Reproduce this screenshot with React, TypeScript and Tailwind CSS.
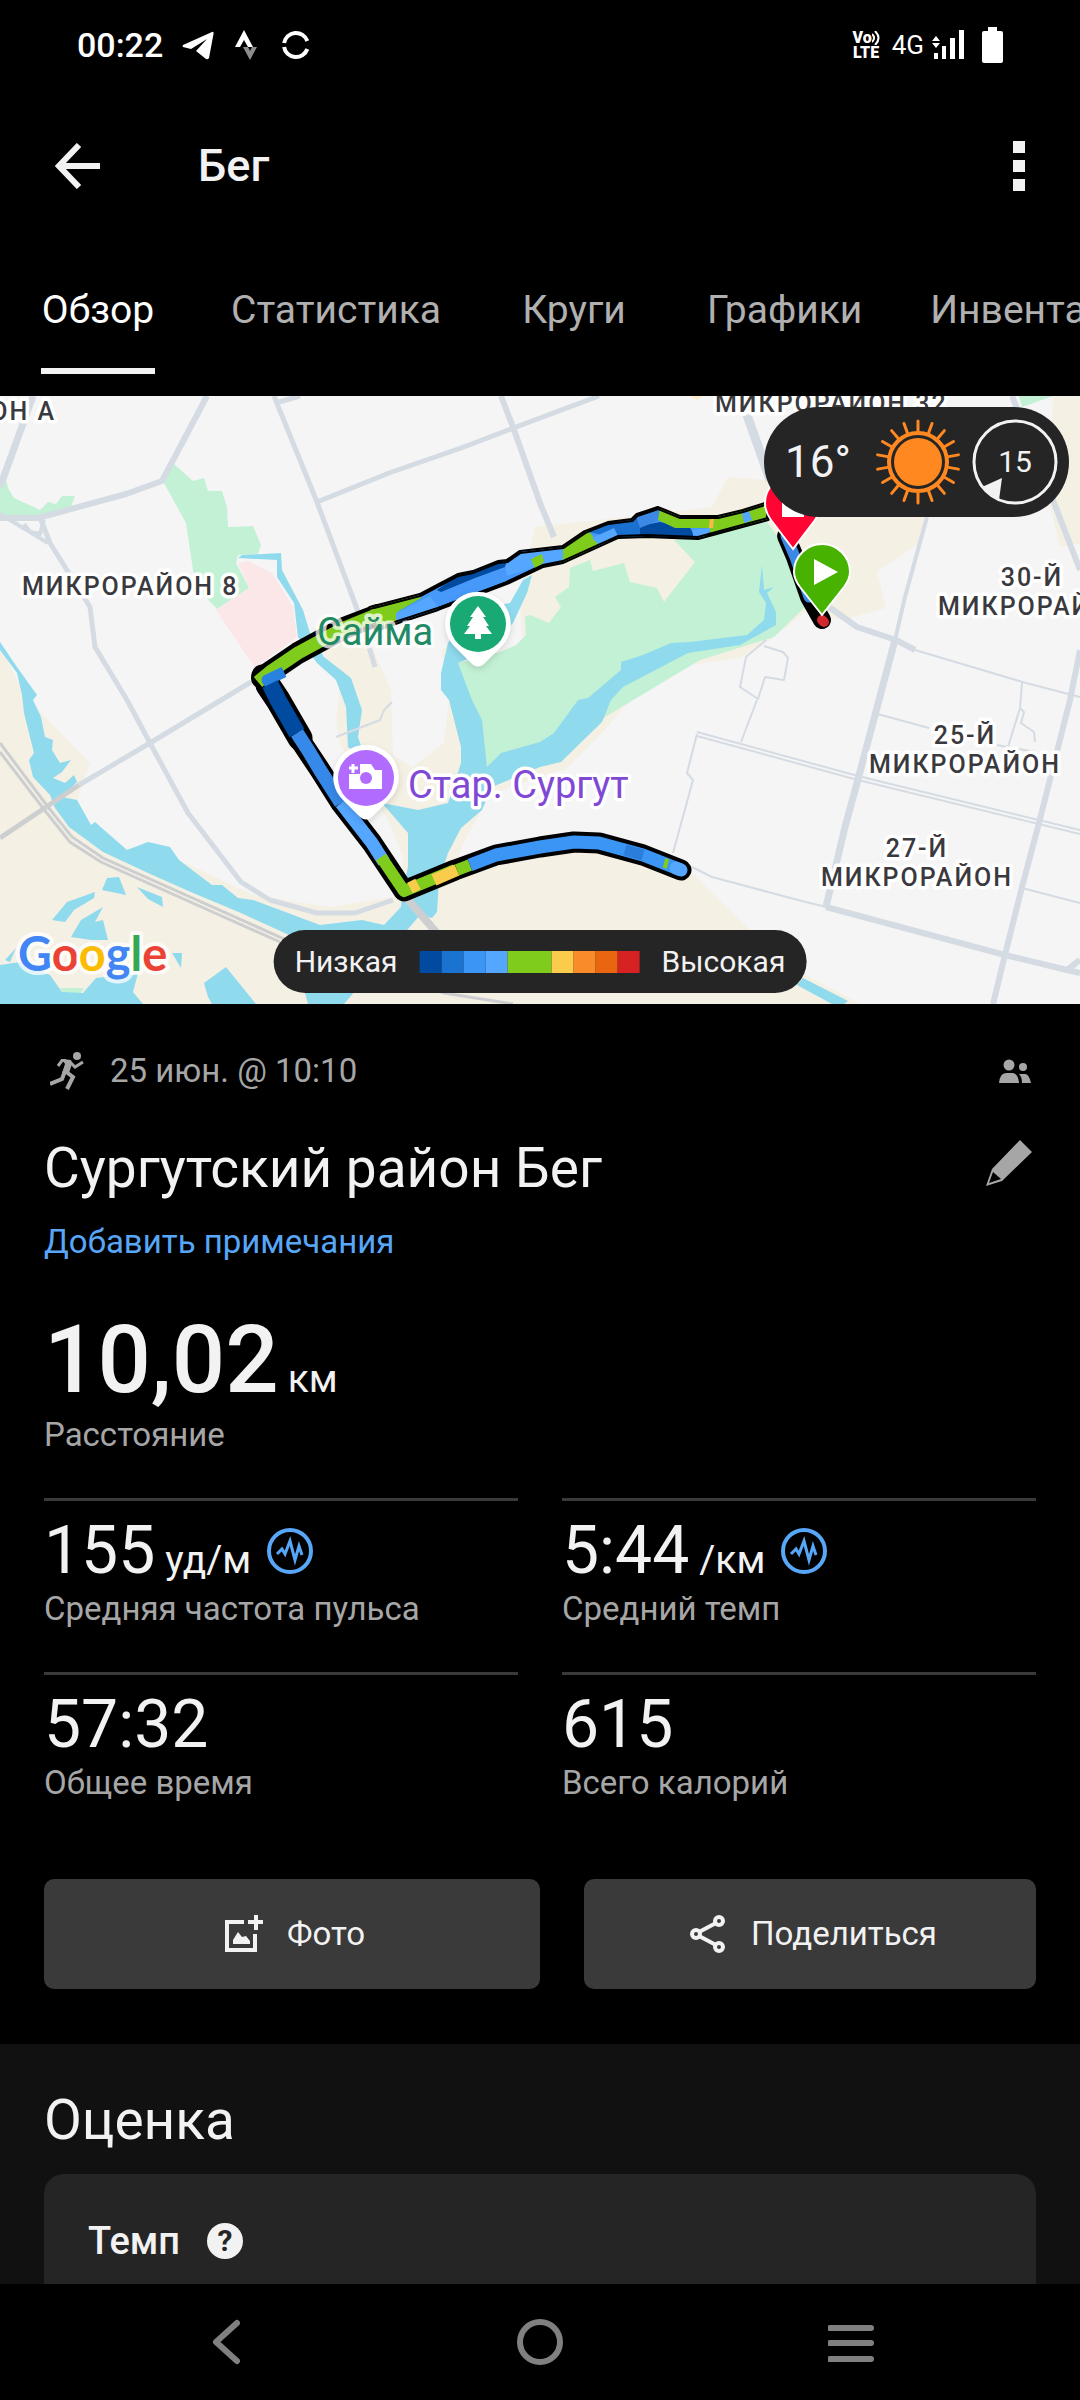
import React, { useState } from 'react';

const TABS = ['Обзор', 'Статистика', 'Круги', 'Графики', 'Инвентарь'];

const LEGEND_STEPS = [
  'w-[22px] bg-[#004a9f]',
  'w-[22px] bg-[#1a73d1]',
  'w-[22px] bg-[#3b95f5]',
  'w-[22px] bg-[#54a6ff]',
  'w-[44px] bg-[#80cc1c]',
  'w-[22px] bg-[#fbcb4c]',
  'w-[22px] bg-[#f98c28]',
  'w-[22px] bg-[#e9650f]',
  'w-[22px] bg-[#d62222]',
];

const SUN_RAYS = Array.from({ length: 18 }, (_, i) => i * 20);

const WATER = [
  'M0 642 17 667 37 695 33 700 41 717 45 737 53 740 52 750 60 763 71 760 62 772 53 778 65 783 74 775 77 782 62 797 77 800 91 825 95 822 127 850 148 842 170 847 179 860 212 885 222 885 238 898 253 900 320 925 362 920 384 925 401 907 402 893 408 867 408 833 382 803 418 810 448 803 461 763 461 747 449 700 441 690 441 673 448 643 470 610 510 603 523 580 532 575 527 593 513 623 490 650 458 663 472 700 482 720 487 767 501 753 540 742 554 733 578 700 588 698 621 670 621 662 643 655 671 643 690 642 747 635 764 620 766 603 759 592 762 565 764 590 774 587 767 593 776 612 776 625 740 645 688 653 623 687 611 700 602 722 561 762 540 767 492 787 482 810 461 828 448 853 439 880 437 912 432 918 420 915 344 1004 308 1004 289 935 241 913 193 893 148 873 103 852 69 827 55 808 50 795 33 777 29 760 34 753 24 713 22 695 17 673 0 650Z',
  'M238 558 242 555 281 553 282 570 303 610 310 633 324 657 351 678 362 710 358 737 366 760 348 747 346 707 336 680 317 663 298 637 294 603 277 577 277 560Z',
  'M0 965 20 962 50 975 62 992 83 993 96 978 138 973 133 992 143 1004 0 1004Z',
  'M107 878 119 877 126 895 102 890Z',
  'M52 920 67 902 95 892 94 898 74 910 65 922Z',
  'M71 937 81 920 103 907 95 922 103 920 108 940 91 940Z',
  'M137 887 162 897 163 907 148 899Z',
  'M172 953 182 953 181 968Z',
  'M5 960 16 948 10 962Z',
  'M204 983 226 967 256 1004 212 1004 208 997Z',
  'M797 985 803 978 848 1001 844 1004 832 1004Z',
];

const ROADS = [
  { d: 'M33 396 0 487', w: 7 },
  { d: 'M207 396 162 481 126 494 38 518 0 518', w: 6 },
  { d: 'M0 514 48 543 M24 524 30 532 40 534 44 520', w: 4 },
  { d: 'M41 520 50 543 90 607 95 647 127 700 150 743 188 813 241 882 270 900 317 913 355 913 393 900', w: 5 },
  { d: 'M251 682 150 743 79 785', w: 5 },
  { d: 'M274 396 317 502 360 617 375 667', w: 5 },
  { d: 'M317 502 389 473 461 448 540 418 599 396 M279 402 300 396', w: 5 },
  { d: 'M501 396 513 427 540 503 554 537', w: 6 },
  { d: 'M747 415 770 480', w: 9 },
  { d: 'M1012 396 1053 500 1080 570', w: 6 },
  { d: 'M927 517 905 597 895 640', w: 4 },
  { d: 'M895 640 879 700 857 783 845 827 826 907', w: 7 },
  { d: 'M826 907 1005 955 1067 970 1080 973 M1067 970 1080 960', w: 6 },
  { d: 'M1080 650 1070 700 1039 823 1022 887 1005 955 993 1004', w: 6 },
  { d: 'M829 607 857 627 896 640 915 650', w: 6 },
  { d: 'M915 650 1026 683 1080 697', w: 2 },
  { d: 'M697 732 858 776 1080 830 M697 736 858 780 1080 834', w: 2 },
  { d: 'M697 734 687 773 693 780 673 853', w: 2 },
  { d: 'M757 700 741 742 M874 713 929 728 M997 745 1035 752', w: 2 },
  { d: 'M764 646 783 652 788 658 784 680 765 677 758 699 740 687 746 657 766 640', w: 2 },
  { d: 'M692 867 712 877 798 900 826 907 M1022 888 1080 903', w: 2 },
  { d: 'M1022 683 1020 708 1008 747 M1020 708 1024 712 1021 723 1034 732 1035 742', w: 2 },
  { d: 'M336 737 380 720 384 710 392 702', w: 2 },
];

const LOWER_ROUTE =
  'M262 675 278 700 300 740 320 770 341 803 372 843 404 891 455 870 496 855 540 847 574 842 599 843 643 855 681 870';

// out and back laps overlap here, so the band is drawn as an area
const UPPER_BAND =
  'M370 608 420 595 437 586 458 575 473 572 498 562 507 561 520 552 563 547 585 532 608 523 632 520 637 515 658 508 680 517 718 517 743 511 768 503 768 519 698 538 647 536 618 537 563 562 543 566 507 583 438 609 398 622 376 630Z';

const UPPER_PATCHES = [
  { d: 'M366 608 420 594 421 598 397 612 400 626 366 636Z', c: '#80cc1c' },
  { d: 'M396 613 430 596 440 610 396 624Z', c: '#54a6ff' },
  { d: 'M437 590 458 575 507 560 505 567 475 578 441 592Z', c: '#004a9f' },
  { d: 'M505 566 522 551 563 547 563 562 535 567 507 576Z', c: '#54a6ff' },
  { d: 'M531 559 542 554 544 562 535 569Z', c: '#80cc1c' },
  { d: 'M563 547 588 530 601 547 563 564Z', c: '#80cc1c' },
  { d: 'M588 532 618 521 645 514 645 538 618 538Z', c: '#1a70ce' },
  { d: 'M592 538 614 528 618 536 600 546Z', c: '#54a6ff' },
  { d: 'M640 526 660 522 690 528 697 539 640 537Z', c: '#004a9f' },
  { d: 'M636 516 659 508 662 519 640 528Z', c: '#3b88e5' },
  { d: 'M692 530 711 528 706 537 694 540Z', c: '#54a6ff' },
  { d: 'M660 507 680 516 718 516 768 502 768 520 710 534 710 528 675 528 658 520Z', c: '#80cc1c' },
  { d: 'M710 518H714L713 528H709Z', c: '#fbb94c' },
  { d: 'M742 512 749 511 752 520 744 523Z', c: '#54a6ff' },
];

const ROUTE_SEGMENTS = [
  { d: 'M258 682 270 672 298 653 344 628 376 615', c: '#80cc1c', w: 13 },
  { d: 'M284 672 267 680 275 692', c: '#2a82e0', w: 11 },
  { d: 'M270 684 278 700 297 733', c: '#004a9f', w: 17 },
  { d: 'M297 733 308 750 320 770 341 803', c: '#3689e8', w: 14 },
  { d: 'M341 803 372 843 384 862', c: '#54a6ff', w: 13 },
  { d: 'M381 857 404 891 455 870', c: '#80cc1c', w: 12 },
  { d: 'M410 888 418 884 M434 880 457 870', c: '#fbcb4c', w: 12 },
  { d: 'M457 870 470 865', c: '#80cc1c', w: 12 },
  { d: 'M470 865 496 855 540 847 574 842 599 843 643 855 681 870', c: '#3b95f5', w: 13 },
  { d: 'M625 850 643 855', c: '#2a7ddb', w: 11 },
  { d: 'M664 863 668 864', c: '#80cc1c', w: 10 },
];

const DISTRICTS = [
  { x: 56, y: 420, text: 'ОН А', anchor: 'end' as const },
  { x: 22, y: 595, text: 'МИКРОРАЙОН 8', anchor: 'start' as const },
  { x: 715, y: 412, text: 'МИКРОРАЙОН 32', anchor: 'start' as const },
  { x: 1032, y: 586, text: '30-Й', anchor: 'middle' as const },
  { x: 938, y: 615, text: 'МИКРОРАЙОН', anchor: 'start' as const },
  { x: 965, y: 744, text: '25-Й', anchor: 'middle' as const },
  { x: 965, y: 773, text: 'МИКРОРАЙОН', anchor: 'middle' as const },
  { x: 917, y: 857, text: '27-Й', anchor: 'middle' as const },
  { x: 917, y: 886, text: 'МИКРОРАЙОН', anchor: 'middle' as const },
];

const StatusBar: React.FC = () => (
  <div className="flex h-[90px] items-center justify-between px-[77px] text-white">
    <div className="flex items-center">
      <span className="text-[34px] leading-10 font-medium">00:22</span>
      <svg className="ml-[19px] h-8 w-8" viewBox="0 0 32 32" fill="currentColor">
        <path d="M1 16 30 3Q32 2 31.500 5L27 29Q26 31 24 30L14 22 25 10 9 20 1 18Q0 17 1 16Z" />
      </svg>
      <svg className="ml-5 h-8 w-6" viewBox="0 0 24 32">
        <path d="M1 18 10 1 19 18H14L10 11 6 18Z" fill="#fff" />
        <path d="M9 18H14L16 22 18 18H23L16 31Z" fill="#8c8c8c" />
      </svg>
      <svg className="ml-[22px] h-8 w-8" viewBox="0 0 32 32" fill="none" stroke="currentColor" strokeWidth="4">
        <path d="M4.100 14A12 12 0 0 1 27.300 12M4.100 18A12 12 0 0 0 27.300 20" />
      </svg>
    </div>
    <div className="flex items-center">
      <div className="flex flex-col items-center text-[16px] leading-[15px] font-black">
        <span className="flex items-center">
          Vo
          <svg className="h-[14px] w-2" viewBox="0 0 8 14" fill="none" stroke="currentColor" strokeWidth="2">
            <path d="M0 3Q4 7 0 11M3 0Q10 7 3 14" />
          </svg>
        </span>
        <span>LTE</span>
      </div>
      <span className="ml-3 text-[26px] leading-8">4G</span>
      <svg className="ml-2 h-8 w-8" viewBox="0 0 32 32" fill="currentColor">
        <path d="M0 12 4 7 8 12ZM0 14 4 19 8 14ZM2 24H6V30H2ZM10 17H14V30H10ZM18 9H23V30H18ZM27 1H32V30H27Z" />
      </svg>
      <svg className="ml-[18px] h-9 w-[21px]" viewBox="0 0 21 36" fill="currentColor">
        <path d="M6 0H15V4H19Q21 4 21 6V34Q21 36 19 36H2Q0 36 0 34V6Q0 4 2 4H6Z" />
      </svg>
    </div>
  </div>
);

const PulseIcon: React.FC = () => (
  <svg className="ml-4 h-[46px] w-[46px] self-center" viewBox="-23 -23 46 46" fill="none" stroke="#58a6f7">
    <circle r="21" strokeWidth="4" />
    <path d="M-13 3-8-2-5 3 0-10 5 9 9-5 12 4" strokeWidth="3" />
  </svg>
);

const RouteMap: React.FC = () => (
  <svg className="block w-full font-['Roboto',sans-serif]" viewBox="0 396 1080 608" role="img" aria-label="Карта">
    <rect y="396" width="1080" height="608" fill="#f5f5f5" />

    {/* sandy ground */}
    <g fill="#f4f0e4">
      <path d="M0 645 22 690 45 717 90 763 77 800 91 825 127 850 148 842 179 860 253 895 330 907 393 897 403 867 403 843 375 800 440 830 439 880 500 850 560 838 643 842 692 873 750 930 802 973 860 1004 0 1004Z" />
      <path d="M312 627 372 647 391 690 393 755 413 767 444 743 450 690 441 650 460 640 480 790 448 820 418 820 382 803 340 745 336 720 340 690Z" />
      <path d="M382 803 420 800 500 750 560 770 490 795 465 840 440 900 400 910 404 860Z" />
      <path d="M535 527 643 515 712 507 728 477 764 480 927 517 919 543 877 572 886 608 843 620 805 612 770 640 740 658 688 665 640 690 600 735 565 770 530 770 520 600Z" />
      <path d="M1053 396H1080V544L1060 547 1050 505Z" />
      <path d="M690 396H703L697 400Z" fill="#fbecc9" />
    </g>

    {/* parks */}
    <g fill="#c3f1d5">
      <path d="M174 464 193 481 204 478 208 491 222 491 227 507 228 527 253 526 261 545 258 554 238 555 236 563 249 588 217 609 196 587 191 557 186 523 164 483Z" />
      <path d="M0 480 5 477 9 490 14 498 40 510 48 502 56 504 62 496H75L71 507 34 518 0 517Z" />
      <path d="M458 663 500 652 516 645 526 635 525 617 530 615 549 623 561 607 555 597 569 587 570 568 590 560 593 571 624 563 630 582 657 588 664 602 695 562 674 540 712 533 764 518 778 537 805 607 774 637 700 660 600 720 487 767 470 720Z" />
      <path d="M1019 396H1053L1022 407Z" />
      <path d="M60 988H84L80 994H64Z" />
    </g>
    <path d="M238 563 248 561 272 573 293 607 297 637 255 668 216 610 249 588Z" fill="#fbe7e7" />

    <g fill="#90daee">
      {WATER.map((d) => (
        <path key={d} d={d} />
      ))}
    </g>

    {/* railway */}
    <g fill="none" stroke="#cdced0" strokeWidth="3">
      <path d="M0 743 48 807 72 837 103 858 282 938 444 993 513 1004M0 752 46 812 70 842 101 862 280 942" />
      <path d="M79 785 0 838" strokeWidth="5" />
      <path d="M404 895 436 932" strokeWidth="8" />
    </g>
    <g fill="none" stroke="#d5dbe3" strokeLinejoin="round">
      {ROADS.map((road) => (
        <path key={road.d} d={road.d} strokeWidth={road.w} />
      ))}
    </g>

    {/* recorded track */}
    <g fill="none" strokeLinejoin="round" strokeLinecap="round">
      <g stroke="#000">
        <path d="M262 678 270 672 298 653 344 628 378 615" strokeWidth="22" />
        <path d={UPPER_BAND} strokeWidth="4" fill="#4699f8" />
        <path d={LOWER_ROUTE} strokeWidth="21" />
        <path d="M268 685 278 700 300 738" strokeWidth="25" />
        <path d="M786 536 795 557 809 597 822 620" strokeWidth="18" />
      </g>
      <path d="M786 536 795 557 809 597" stroke="#3b88e5" strokeWidth="11" />
      <path d="M822 620 824 622" stroke="#d0282c" strokeWidth="10" />
      <clipPath id="band">
        <path d={UPPER_BAND} />
      </clipPath>
      <g clipPath="url(#band)">
        {UPPER_PATCHES.map((p) => (
          <path key={p.d} d={p.d} fill={p.c} />
        ))}
        <path d={UPPER_BAND} stroke="#000" strokeWidth="4" />
      </g>
      <g strokeLinecap="butt">
        {ROUTE_SEGMENTS.map((s) => (
          <path key={s.d} d={s.d} stroke={s.c} strokeWidth={s.w} />
        ))}
      </g>
      <path d="M676 868 681 870" stroke="#54a6ff" strokeWidth="13" />
    </g>

    <g
      className="text-[25px] font-medium tracking-[2px]"
      fill="#3a3a3e"
      stroke="#fff"
      strokeWidth="7"
      strokeLinejoin="round"
      paintOrder="stroke"
    >
      {DISTRICTS.map((d) => (
        <text key={`${d.text}${d.y}`} x={d.x} y={d.y} textAnchor={d.anchor}>
          {d.text}
        </text>
      ))}
    </g>
    <g className="text-[38px]" stroke="#fff" strokeWidth="7" strokeLinejoin="round" paintOrder="stroke">
      <text x="317" y="645" fill="#1f8a63" strokeOpacity="0.75">
        Сайма
      </text>
      <text x="408" y="798" fill="#8148d6">
        Стар. Сургут
      </text>
    </g>

    {/* park pin */}
    <path d="M478 592A32 32 0 0 1 501 647L484 664Q478 669 472 664L455 647A32 32 0 0 1 478 592Z" fill="#fff" className="drop-shadow-md" />
    <circle cx="478" cy="624" r="28" fill="#19a974" />
    <path d="M478 606 486 617H483L489 626H486L492 634H481V639H475V634H464L470 626H467L473 617H470Z" fill="#fff" />

    {/* sightseeing pin */}
    <path d="M366 745A32 32 0 0 1 389 800L372 817Q366 822 360 817L343 800A32 32 0 0 1 366 745Z" fill="#fff" className="drop-shadow-md" />
    <circle cx="366" cy="778" r="28" fill="#b16bff" />
    <path d="M349 774H360V764H371L375 770H382V789H349Z" fill="#fff" />
    <path d="M353 764V773M349 768H358" stroke="#fff" strokeWidth="3" />
    <circle cx="366" cy="778" r="6" fill="#b16bff" />

    {/* finish and start */}
    <path d="M793 549 771 520Q765 512 765 503A28 28 0 0 1 821 503Q821 512 815 520Z" fill="#ff0533" stroke="#fff" strokeWidth="2" />
    <rect x="782" y="495" width="22" height="22" fill="#fff" />
    <path d="M822 615 800 587Q794 579 794 572A28 28 0 0 1 850 572Q850 579 844 587Z" fill="#47b300" stroke="#fff" strokeWidth="2" />
    <path d="M814 559 838 572 814 585Z" fill="#fff" />

    <text
      x="18"
      y="971"
      className="font-['Lato',sans-serif] text-[47px] font-bold"
      stroke="#fff"
      strokeOpacity="0.75"
      strokeWidth="8"
      strokeLinejoin="round"
      paintOrder="stroke"
    >
      <tspan fill="#4285f4">G</tspan>
      <tspan fill="#ea4335">o</tspan>
      <tspan fill="#fbbc04">o</tspan>
      <tspan fill="#4285f4">g</tspan>
      <tspan fill="#34a853">l</tspan>
      <tspan fill="#ea4335">e</tspan>
    </text>
  </svg>
);

const WeatherPill: React.FC = () => (
  <div className="absolute top-[11px] right-[11px] flex h-[110px] items-center rounded-full bg-[#252525] pr-[11px] pl-[21px] text-[#f2f2f2]">
    <span className="text-[44px] leading-[52px]">16°</span>
    <svg className="ml-6 h-[86px] w-[86px]" viewBox="-43 -43 86 86" fill="none" stroke="#ff8820">
      <circle r="24" fill="#ff8820" stroke="none" />
      <circle r="29" strokeWidth="4" />
      {SUN_RAYS.map((a) => (
        <path key={a} d="M0-31V-41" strokeWidth="3" strokeLinecap="round" transform={`rotate(${a})`} />
      ))}
    </svg>
    <div className="relative ml-[11px] flex h-[86px] w-[86px] items-center justify-center">
      <svg className="absolute inset-0 h-full w-full" viewBox="-43 -43 86 86">
        <circle r="41" fill="none" stroke="#f2f2f2" strokeWidth="3" />
        <path d="M-33 25-13 16-16 38Z" fill="#f2f2f2" />
      </svg>
      <span className="text-[30px] leading-8">15</span>
    </div>
  </div>
);

const Stat: React.FC<{ value: string; unit?: string; label: string; pulse?: boolean }> = ({ value, unit, label, pulse }) => (
  <div className="border-t-[3px] border-[#3a3a3a] pt-3">
    <div className="flex items-baseline">
      <span className="text-[66px] leading-[76px]">{value}</span>
      {unit && <span className="ml-[10px] text-[39px] leading-[46px]">{unit}</span>}
      {pulse && <PulseIcon />}
    </div>
    <div className="text-[33px] leading-10 text-[#a6a6a6]">{label}</div>
  </div>
);

export default function App() {
  const [active, setActive] = useState('Обзор');

  return (
    <div className="flex min-h-screen flex-col overflow-x-hidden bg-black font-['Roboto',sans-serif] text-[#f2f2f2]">
      <StatusBar />

      <header className="flex h-[152px] items-center px-[55px]">
        <button aria-label="Назад">
          <svg className="h-[46px] w-[46px]" viewBox="0 0 46 46" fill="none" stroke="currentColor" strokeWidth="6">
            <path d="M24 2 4 23 24 44M5 23H45" />
          </svg>
        </button>
        <h1 className="ml-[97px] flex-1 text-[45px] leading-[52px] font-medium">Бег</h1>
        <button aria-label="Ещё" className="flex flex-col gap-[7px]">
          <span className="h-3 w-3 bg-[#f2f2f2]" />
          <span className="h-3 w-3 bg-[#f2f2f2]" />
          <span className="h-3 w-3 bg-[#f2f2f2]" />
        </button>
      </header>

      <nav className="flex overflow-hidden pb-[22px] pl-[3px]" role="tablist">
        {TABS.map((tab) => (
          <button
            key={tab}
            role="tab"
            aria-selected={tab === active}
            onClick={() => setActive(tab)}
            className={`flex min-w-[190px] shrink-0 flex-col items-center px-[38px] pt-[45px] text-[39px] leading-[46px] last:px-[30px] ${
              tab === active ? 'text-white' : 'text-[#b0b0b0]'
            }`}
          >
            <span>{tab}</span>
            <span className={`mt-[35px] h-[6px] w-full ${tab === active ? 'bg-[#f2f2f2]' : 'bg-transparent'}`} />
          </button>
        ))}
      </nav>

      <div className="relative overflow-hidden">
        <RouteMap />
        <WeatherPill />
        <div className="absolute bottom-[11px] left-1/2 flex h-[63px] -translate-x-1/2 items-center gap-[22px] rounded-full bg-[#252525] px-[21px] text-[30px] leading-9">
          <span>Низкая</span>
          <div className="flex">
            {LEGEND_STEPS.map((step) => (
              <span key={step} className={`h-[22px] ${step}`} />
            ))}
          </div>
          <span>Высокая</span>
        </div>
      </div>

      <main className="px-11 pt-[47px] pb-[55px]">
        <div className="flex items-center text-[#a6a6a6]">
          <svg className="ml-[6px] h-10 w-[34px]" viewBox="0 0 34 40" fill="none" stroke="currentColor">
            <circle cx="27" cy="5" r="4" fill="currentColor" stroke="none" />
            <path d="M12 8 21 9 22 13 19 22H12L15 13Z" fill="currentColor" stroke="none" />
            <path d="M16 9.500H12L8 15M20 11 25 16 33 11" strokeWidth="3" />
            <path d="M15 20 23 26 17 38" strokeWidth="4" />
            <path d="M15 20 12 28 0 33" strokeWidth="4" />
          </svg>
          <span className="ml-[26px] flex-1 text-[33px] leading-10">25 июн. @ 10:10</span>
          <svg className="mr-[5px] h-6 w-8" viewBox="0 0 32 24" fill="currentColor">
            <circle cx="10" cy="6" r="5.500" />
            <circle cx="24" cy="8" r="4" />
            <path d="M0 24Q1 14 7 14H13Q19 14 20 24ZM20 15H26Q30 15 32 24H23Q23 18 20 15Z" />
          </svg>
        </div>

        <div className="mt-[45px] flex items-start justify-between">
          <h2 className="text-[55px] leading-[64px]">Сургутский район Бег</h2>
          <button aria-label="Изменить" className="mt-1 mr-1 text-[#a6a6a6]">
            <svg className="h-[46px] w-[46px]" viewBox="0 0 46 46" fill="currentColor" fillRule="evenodd">
              <path d="M34 0 46 12 16 41 0 46 6 29ZM7 32 3 43 15 39Z" />
            </svg>
          </button>
        </div>
        <a href="#notes" className="mt-[22px] block text-[33px] leading-10 text-[#58a6f7]">
          Добавить примечания
        </a>

        <div className="mt-[50px] flex items-baseline">
          <span className="text-[94px] leading-[96px] font-medium">10,02</span>
          <span className="ml-[9px] text-[39px] leading-[46px]">км</span>
        </div>
        <div className="mt-[7px] text-[33px] leading-10 text-[#a6a6a6]">Расстояние</div>

        <div className="mt-[43px] grid grid-cols-2 gap-x-11 gap-y-[43px]">
          <Stat value="155" unit="уд/м" label="Средняя частота пульса" pulse />
          <Stat value="5:44" unit="/км" label="Средний темп" pulse />
          <Stat value="57:32" label="Общее время" />
          <Stat value="615" label="Всего калорий" />
        </div>

        <div className="-mx-11 mt-[76px] grid grid-cols-2 text-[33px] leading-10">
          <div className="pl-11">
            <button className="flex h-[110px] w-full items-center justify-center gap-6 rounded-[10px] bg-[#3a3a3a] pl-[6px]">
              <svg className="h-[38px] w-[38px]" viewBox="0 0 38 38" fill="none" stroke="currentColor" strokeWidth="4">
                <path d="M19 7H2V35H30V19M31 0V15M23 7H38" />
                <path d="M8 29V25L13 17 17 22 21 21 25 26V29Z" fill="currentColor" stroke="none" />
              </svg>
              Фото
            </button>
          </div>
          <div className="px-11">
            <button className="flex h-[110px] w-full items-center justify-center gap-6 rounded-[10px] bg-[#3a3a3a] pl-[6px]">
              <svg className="h-[38px] w-[38px]" viewBox="0 0 38 38" fill="none" stroke="currentColor" strokeWidth="4">
                <circle cx="30" cy="6" r="4" />
                <circle cx="7" cy="19" r="4" />
                <circle cx="30" cy="32" r="4" />
                <path d="M10 17 27 8M10 21 27 30" />
              </svg>
              Поделиться
            </button>
          </div>
        </div>
      </main>

      <section className="flex-1 bg-[#111] px-11 pt-11">
        <h2 className="text-[55px] leading-[64px]">Оценка</h2>
        <div className="mt-[22px] flex items-center rounded-t-[20px] bg-[#252525] px-11 pt-11 pb-5">
          <h3 className="text-[38px] leading-[46px] font-medium">Темп</h3>
          <button
            aria-label="Справка"
            className="ml-[27px] flex h-9 w-9 items-center justify-center rounded-full bg-[#f2f2f2] text-[30px] leading-9 font-bold text-[#252525]"
          >
            ?
          </button>
        </div>
      </section>

      <nav className="grid h-[116px] grid-cols-3 items-center justify-items-center bg-black px-[72px] text-[#808080]">
        <button aria-label="Назад">
          <svg className="h-12 w-12" viewBox="0 0 48 48" fill="none" stroke="currentColor" strokeWidth="6" strokeLinecap="round" strokeLinejoin="round">
            <path d="M33 5 12 24 33 43" />
          </svg>
        </button>
        <button aria-label="Домой">
          <svg className="h-12 w-12" viewBox="0 0 48 48" fill="none" stroke="currentColor" strokeWidth="6">
            <circle cx="24" cy="24" r="20" />
          </svg>
        </button>
        <button aria-label="Меню">
          <svg className="h-12 w-12" viewBox="0 0 48 48" stroke="currentColor" strokeWidth="6" strokeLinecap="round">
            <path d="M2 10H43M2 25H43M2 41H43" />
          </svg>
        </button>
      </nav>
    </div>
  );
}
